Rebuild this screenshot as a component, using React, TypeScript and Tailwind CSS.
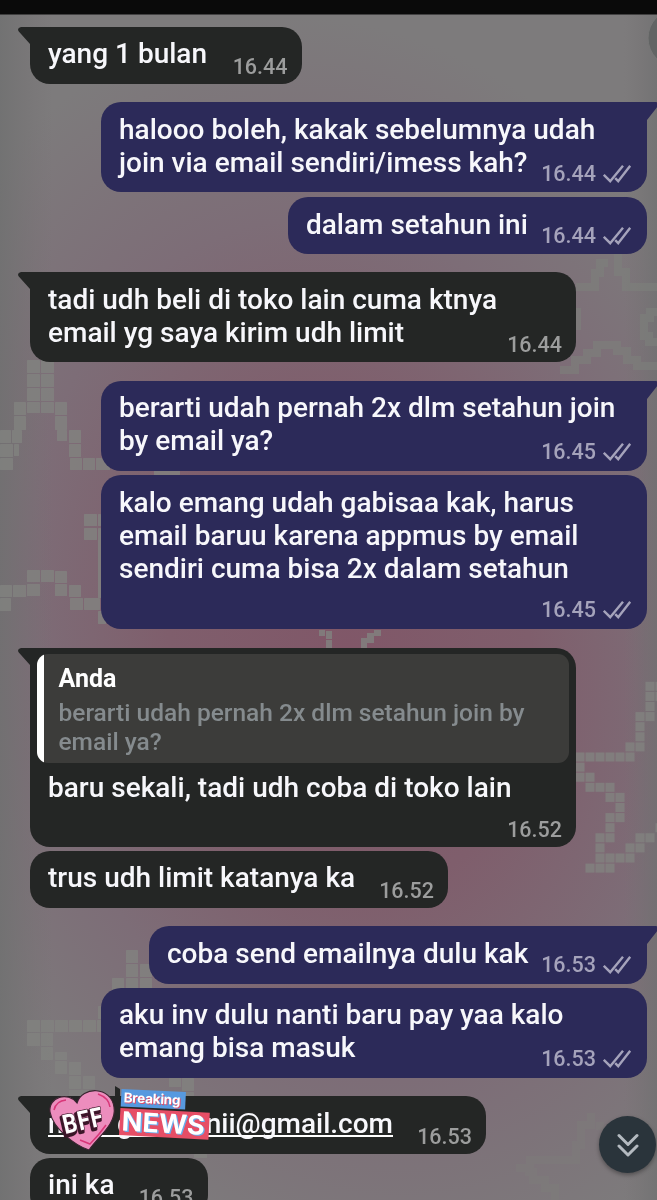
import type { ReactNode } from "react";
import clsx from "clsx";

type Cell = [number, number, number, number];

// pixel stars of the chat wallpaper: x, y, width, height
const LARGE_CELLS: Cell[] = [
    [27, 360, 13, 13], [41, 360, 13, 13], [27, 374, 13, 13], [41, 374, 13, 13],
    [27, 388, 13, 13], [41, 388, 13, 13], [27, 402, 13, 11], [41, 402, 13, 11],
    [14, 402, 12, 13], [14, 416, 12, 14], [55, 402, 12, 13], [55, 416, 12, 14], [57, 430, 10, 11],
    [0, 430, 11, 13], [12, 430, 10, 13], [0, 444, 13, 13], [0, 458, 13, 12], [14, 444, 5, 12],
    [69, 430, 12, 13], [69, 444, 12, 13], [70, 458, 12, 12], [83, 458, 12, 12], [96, 458, 14, 12],
    [154, 470, 26, 5],
    [84, 514, 13, 12], [84, 528, 13, 12], [98, 514, 3, 12], [98, 528, 3, 70],
    [27, 570, 13, 12], [41, 570, 13, 12], [27, 584, 13, 12], [55, 571, 12, 12], [55, 584, 12, 12],
    [0, 585, 12, 12], [13, 585, 13, 12], [0, 598, 11, 13],
    [69, 585, 12, 12], [70, 598, 13, 12], [84, 598, 16, 12], [98, 611, 8, 13],
    [126, 950, 12, 13], [126, 964, 12, 13], [140, 964, 12, 13],
    [112, 978, 12, 13], [126, 978, 12, 13], [140, 978, 12, 13],
    [98, 1006, 6, 13],
    [27, 1020, 13, 12], [41, 1020, 13, 12], [55, 1020, 13, 12], [69, 1020, 13, 12], [83, 1020, 13, 12], [97, 1020, 5, 12],
    [27, 1033, 13, 13], [41, 1033, 12, 13], [41, 1047, 12, 13], [55, 1052, 12, 8], [55, 1061, 12, 13],
    [69, 1062, 12, 13], [69, 1076, 12, 13], [83, 1076, 12, 13], [69, 1090, 26, 7],
    [169, 1078, 12, 9], [182, 1078, 12, 13], [182, 1092, 12, 5], [194, 1154, 13, 4],
];

const MID_CELLS: [number, number][] = [
    [0, 0], [1, 0], [2, 0], [3, 0], [4, 0], [5, 0], [0, 1], [0, 2], [1, 2], [1, 3], [2, 3], [3, 3],
    [3, 4], [4, 4], [4, 5], [3, 6], [4, 6], [3, 7], [2, 8], [3, 8], [2, 9], [2, 10], [3, 10], [4, 10], [5, 10],
    [1, 11], [2, 11], [3, 11], [5, 9], [6, 9], [6, 8], [7, 8], [8, 7],
    [5, -1], [6, -1], [6, -2], [6, -3], [6, -4], [7, -4], [7, -5], [7, -6], [8, -6], [7, -7], [8, -7],
];

const SMALL_CELLS: Cell[] = [
    [319, 630, 6, 6], [326, 631, 6, 8], [326, 640, 6, 8], [374, 630, 7, 6], [367, 633, 7, 10], [361, 638, 6, 10],
];

function Wallpaper() {
    return (
        <svg className="absolute inset-0" width="657" height="1200" viewBox="0 0 657 1200">
            <defs>
                <radialGradient id="pink" gradientUnits="userSpaceOnUse" cx="0" cy="0" r="1" gradientTransform="translate(350 650) rotate(-12) scale(470 640)">
                    <stop offset="0" stopColor="#805768" />
                    <stop offset="0.38" stopColor="#7f5e6c" />
                    <stop offset="0.68" stopColor="#7d6d77" />
                    <stop offset="1" stopColor="#7d7b7c" />
                </radialGradient>
                <linearGradient id="edge">
                    <stop offset="0" stopColor="#6f7070" stopOpacity="0.8" />
                    <stop offset="0.08" stopColor="#747072" stopOpacity="0" />
                    <stop offset="0.95" stopColor="#747072" stopOpacity="0" />
                    <stop offset="1" stopColor="#6f7070" stopOpacity="0.7" />
                </linearGradient>
            </defs>
            <rect width="657" height="1200" fill="url(#pink)" />
            <rect width="657" height="1200" fill="url(#edge)" />
            <g fill="#828380" opacity="0.8">
                {LARGE_CELLS.map(([x, y, w, h]) => (
                    <rect key={`${x}-${y}`} x={x} y={y} width={w} height={h} rx="0.5" />
                ))}
                {MID_CELLS.map(([c, r]) => (
                    <rect key={`m${c}-${r}`} x={575.5 + c * 10} y={752.5 + r * 10.1} width="9" height="9" />
                ))}
                {SMALL_CELLS.map(([x, y, w, h]) => (
                    <rect key={`s${x}-${y}`} x={x} y={y} width={w} height={h} />
                ))}
            </g>
            <g fill="none" stroke="#7d807c" strokeWidth="8" opacity="0.6">
                <path d="M576 287h19v-14h5v-10h8M618 254v18h8v15h31M577 308v22M657 312h-7v6h-6v18h5v6h8" />
                <path d="M560 370h15v-10h12v-7h10v-8h20v6h10v9h10v6h20" />
                <path d="M516 1168h14v-8h46v-15h5v-20h10v-12M600 1122v8M525 1172h8v8h12v8h10v12" opacity="0.6" />
            </g>
            <circle cx="677" cy="38" r="29" fill="#626464" stroke="#777" />
            <rect width="657" height="14.5" fill="#0a0a0a" />
        </svg>
    );
}

function Ticks() {
    return (
        <svg width="28" height="18" viewBox="0 0 28 18" fill="none" stroke="currentColor" strokeWidth="2.4">
            <path d="M0.8 9.8L7.2 16.2L20 0.8M12.2 13.2L15.2 16.2L27.2 0.8" />
        </svg>
    );
}

function Tail({ mine }: { mine?: boolean }) {
    return (
        <svg
            className={clsx("absolute top-0", mine ? "-right-[12px] text-[#2c2a59]" : "-left-[12px] text-[#242625]")}
            width="32"
            height="20"
            viewBox="0 0 32 20"
            fill="currentColor"
        >
            {mine ? <path d="M0 0H29Q33 1 31 4L20 18V20H0Z" /> : <path d="M32 0H3Q-1.5 1 0.8 4.5L12 17V20H32Z" />}
        </svg>
    );
}

type BubbleProps = {
    className: string;
    time: string;
    lines?: string[];
    mine?: boolean;
    tail?: boolean;
    children?: ReactNode;
};

function Bubble({ className, time, lines = [], mine, tail, children }: BubbleProps) {
    return (
        <div
            className={clsx(
                "relative grid shrink-0 rounded-[20px]",
                mine ? "self-end bg-[#2c2a59]" : "self-start bg-[#242625]",
                className
            )}
        >
            {tail && <Tail mine={mine} />}
            <div className="relative [grid-area:1/1]">
                {children}
                <div className={clsx("px-[18px] whitespace-nowrap", !children && "pt-[10.500px]")}>
                    {lines.map((line) => (
                        <p key={line}>{line}</p>
                    ))}
                </div>
            </div>
            <div
                className={clsx(
                    "relative flex items-center gap-[7px] self-end justify-self-end text-[21.5px] leading-6 [grid-area:1/1]",
                    mine ? "pr-4 pb-[6.500px] text-[#a5a3bb]" : "pr-[14px] pb-[5px] text-[#9c9d9d]"
                )}
            >
                <span>{time}</span>
                {mine && <Ticks />}
            </div>
        </div>
    );
}

function Quote() {
    return (
        <div className="mx-[7px] mt-[6px] mb-[7.5px] flex h-[109.5px] overflow-hidden rounded-[11px] bg-[#3c3c3a]">
            <div className="w-[7px] bg-white" />
            <div className="pt-[10px] pl-[14.5px] text-[24.5px] leading-[29px] whitespace-nowrap text-[#858b8e]">
                <p className="mb-[5px] text-[25px] font-bold text-white">Anda</p>
                <p>berarti udah pernah 2x dlm setahun join by</p>
                <p>email ya?</p>
            </div>
        </div>
    );
}

function Stickers() {
    return (
        <svg className="absolute -top-[17px] left-[10px]" width="180" height="80" viewBox="40 1080 180 80" fontFamily="Inter, sans-serif">
            <path d="M115 1087l5 3v14h-5z" fill="#242625" />
            <path
                d="M89 1151C76 1147 53 1130 50 1113C48 1098 68 1092 77 1104C82 1087 111 1087 114 1108C117 1124 99 1137 89 1151Z"
                fill="#ec8dbd"
                stroke="#3a2430"
                strokeWidth="1.2"
            />
            <path d="M54 1111Q56 1102 66 1101M98 1095Q109 1099 110 1108M106 1126Q99 1136 90 1145L80 1141" fill="none" stroke="#d93678" strokeWidth="1.5" />
            <g
                transform="translate(65 1135) rotate(-13) scale(.8 .95)"
                fontFamily="Roboto, sans-serif"
                fontWeight="700"
                fontSize="28"
                letterSpacing="1"
                strokeLinejoin="round"
            >
                <text x="-2" y="2" fill="#5c2740" stroke="#3a1628" strokeWidth="4">BFF</text>
                <text fill="#fff" stroke="#4b1e35" strokeWidth="1.6" paintOrder="stroke">BFF</text>
            </g>
            <g transform="rotate(2.7 121 1090)">
                <path d="M121.5 1090h64.5v17.5h-64.5z" fill="#5799df" />
                <text x="125" y="1104" fontSize="13.5" fontWeight="700" textLength="57" fill="#df4d69">Breaking</text>
                <text x="124" y="1103" fontSize="13.5" fontWeight="700" textLength="57" fill="#fff">Breaking</text>
            </g>
            <g transform="rotate(3 120 1108)">
                <path d="M120.5 1109h89.5v27h-89.5z" fill="#e64e66" />
                <text x="124" y="1132.5" fontSize="26.5" fontWeight="700" textLength="83" lengthAdjust="spacingAndGlyphs" fill="#68acec">NEWS</text>
                <text x="122.5" y="1131.5" fontSize="26.5" fontWeight="700" textLength="83" lengthAdjust="spacingAndGlyphs" fill="#fff">NEWS</text>
            </g>
        </svg>
    );
}

export default function App() {
    return (
        <div className="relative h-[1200px] w-[657px] overflow-hidden bg-[#7a7879] font-['Roboto',sans-serif] text-[28px] leading-[33.3px] font-medium text-[#f7f7fb]">
            <Wallpaper />
            <main className="relative flex h-full flex-col overflow-hidden pt-[26.500px] pr-[10px] pl-[30px]">
                <Bubble className="h-[57.500px] w-[271.500px]" time="16.44" tail lines={["yang 1 bulan"]} />
                <Bubble className="mt-[18px] h-[90px] w-[546px]" time="16.44" mine tail lines={["halooo boleh, kakak sebelumnya udah", "join via email sendiri/imess kah?"]} />
                <Bubble className="mt-[5px] h-[57px] w-[359px]" time="16.44" mine lines={["dalam setahun ini"]} />
                <Bubble className="mt-[18px] h-[90px] w-[546px]" time="16.44" tail lines={["tadi udh beli di toko lain cuma ktnya", "email yg saya kirim udh limit"]} />
                <Bubble className="mt-[18.500px] h-[90px] w-[546px]" time="16.45" mine tail lines={["berarti udah pernah 2x dlm setahun join", "by email ya?"]} />
                <Bubble
                    className="mt-[4.500px] h-[153.500px] w-[546px]"
                    time="16.45"
                    mine
                    lines={["kalo emang udah gabisaa kak, harus", "email baruu karena appmus by email", "sendiri cuma bisa 2x dalam setahun"]}
                />
                <Bubble className="mt-[19px] h-[199px] w-[546px]" time="16.52" tail lines={["baru sekali, tadi udh coba di toko lain"]}>
                    <Quote />
                </Bubble>
                <Bubble className="mt-[4px] h-[57.500px] w-[418px]" time="16.52" lines={["trus udh limit katanya ka"]} />
                <Bubble className="mt-[18px] h-[57.500px] w-[498px]" time="16.53" mine tail lines={["coba send emailnya dulu kak"]} />
                <Bubble className="mt-[4px] h-[90px] w-[546px]" time="16.53" mine lines={["aku inv dulu nanti baru pay yaa kalo", "emang bisa masuk"]} />
                <Bubble className="mt-[18.500px] h-[57.500px] w-[456px]" time="16.53" tail>
                    <div className="mt-[10.500px] ml-[18px] flex h-[30px] w-[345px] items-start border-b-2 border-white">
                        <span className="w-[69px]">n</span>
                        <span>g</span>
                        <span className="ml-auto">nii@gmail.com</span>
                    </div>
                    <Stickers />
                </Bubble>
                <Bubble className="mt-[4px] h-[57.500px] w-[177.500px]" time="16.53" lines={["ini ka"]} />
            </main>
            <button
                aria-label="Scroll to latest"
                className="absolute top-[1116px] left-[599px] flex size-[57px] items-center justify-center rounded-full bg-[#2a343b] shadow-[0_2px_4px_rgba(0,0,0,0.35)]"
            >
                <svg width="22" height="24" viewBox="0 0 22 24" fill="none" stroke="#b4bac0" strokeWidth="3" strokeLinecap="round" strokeLinejoin="round">
                    <path d="M2 2.5L11 11.500L20 2.500M2 13L11 22L20 13" />
                </svg>
            </button>
        </div>
    );
}
